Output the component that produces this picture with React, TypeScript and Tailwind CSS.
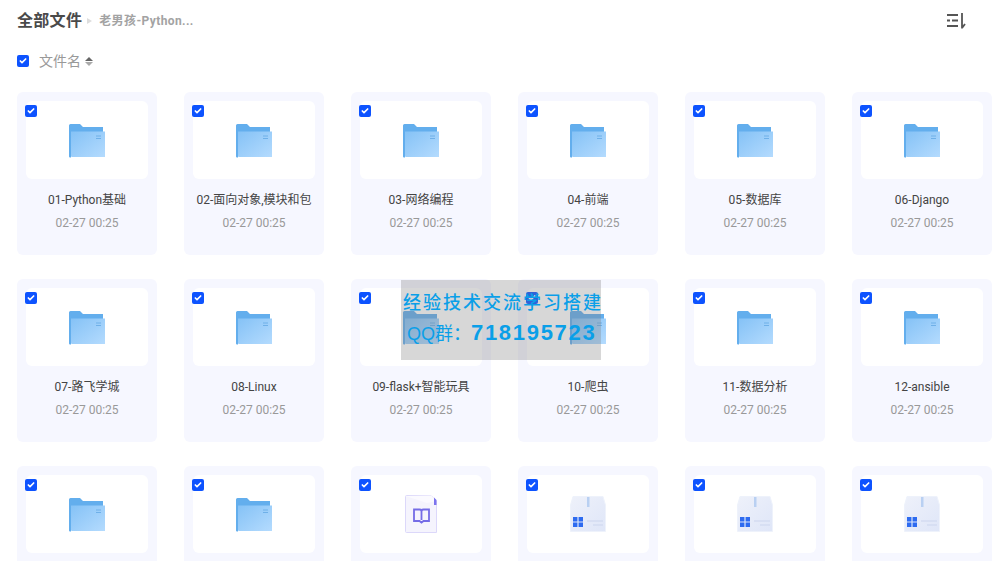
import { Check } from "lucide-react";

type Kind = "folder" | "book" | "box";

const files: { name?: string; date?: string; kind: Kind }[] = [
  { name: "01-Python基础", date: "02-27 00:25", kind: "folder" },
  { name: "02-面向对象,模块和包", date: "02-27 00:25", kind: "folder" },
  { name: "03-网络编程", date: "02-27 00:25", kind: "folder" },
  { name: "04-前端", date: "02-27 00:25", kind: "folder" },
  { name: "05-数据库", date: "02-27 00:25", kind: "folder" },
  { name: "06-Django", date: "02-27 00:25", kind: "folder" },
  { name: "07-路飞学城", date: "02-27 00:25", kind: "folder" },
  { name: "08-Linux", date: "02-27 00:25", kind: "folder" },
  { name: "09-flask+智能玩具", date: "02-27 00:25", kind: "folder" },
  { name: "10-爬虫", date: "02-27 00:25", kind: "folder" },
  { name: "11-数据分析", date: "02-27 00:25", kind: "folder" },
  { name: "12-ansible", date: "02-27 00:25", kind: "folder" },
  { kind: "folder" },
  { kind: "folder" },
  { kind: "book" },
  { kind: "box" },
  { kind: "box" },
  { kind: "box" },
];

function FolderIcon() {
  return (
    <svg width="36" height="34" viewBox="0 0 36 34" className="mt-[2px] block">
      <defs>
        <linearGradient id="front" x1="0" y1="0" x2="1" y2="1">
          <stop offset="0" stopColor="#85c2f6" />
          <stop offset="1" stopColor="#b4dbfe" />
        </linearGradient>
      </defs>
      <path d="M0 1.5Q0 0 1.5 0H11L14 3H34V28H2V33.5H1Q0 33.5 0 32.5Z" fill="#63aeed" />
      <path d="M2 7.5H36V33H3Q2 33 2 32Z" fill="url(#front)" />
      <path d="M27 12H32M27 14.5H32" stroke="#6fb0e8" strokeWidth="1" />
    </svg>
  );
}

function BookIcon() {
  return (
    <svg width="32" height="38" viewBox="0 0 32 38" className="block">
      <path d="M1.5 .5H26L31.5 6V37.5H1.5Q.5 37.5 .5 36.5V1.5Q.5 .5 1.5 .5Z" fill="#f5f4fd" stroke="#dcd8fa" />
      <path d="M.5 1L22 8 31.5 6 26 .5Z" fill="#fbfaff" />
      <path d="M29 2.5L31.5 5V10H29Z" fill="#7c74ee" />
      <path d="M9 14.5H14.5Q16.5 14.5 16.5 16.5Q16.5 14.5 18.5 14.5H24V26H18.5L16.5 27.5L14.5 26H9ZM16.5 16.5V25" fill="none" stroke="#756ce6" strokeWidth="1.8" />
    </svg>
  );
}

function BoxIcon() {
  return (
    <svg width="36" height="36" viewBox="0 0 36 36" className="block">
      <defs>
        <linearGradient id="box" x1="0" y1="0" x2="1" y2="1">
          <stop offset="0" stopColor="#eef1fa" />
          <stop offset="1" stopColor="#dfe6f8" />
        </linearGradient>
      </defs>
      <path d="M3 .5H33L35.5 9V35.5H.5V9Z" fill="url(#box)" stroke="#eef2fb" />
      <path d="M17 1H19.5V11H17Z" fill="#b9d0f2" />
      <path d="M3 21H13V31H3Z" fill="#2e6bf0" />
      <path d="M8 21V31M3 26H13" stroke="#dbe6fb" strokeWidth="1.2" />
      <path d="M17 25H33M23 29H33" stroke="#d3dcf1" strokeWidth="1.5" />
    </svg>
  );
}

function Tick({ className }: { className: string }) {
  return (
    <span className={`flex w-3 h-3 items-center justify-center rounded-[2px] bg-[#0d53ff] ${className}`}>
      <Check className="w-[8px] h-[8px] text-white" strokeWidth={5} />
    </span>
  );
}

export default function App() {
  return (
    <div className="relative h-[561px] w-[1003px] overflow-hidden bg-white font-['Roboto','Noto_Sans_CJK_SC',sans-serif]">
      <div className="flex h-[42px] items-center pl-[17px] pr-[36px]">
        <span className="text-[16px] font-bold leading-[20px] tracking-[.3px] text-[#4a4a4a]">全部文件</span>
        <span className="ml-[5px] h-0 w-0 border-y-[3.5px] border-l-[5px] border-y-transparent border-l-[#ddd]" />
        <span className="ml-[7px] text-[12px] font-bold tracking-[.4px] text-[#a3a3a3]">老男孩-Python...</span>
        <svg width="20" height="16" viewBox="0 0 20 16" className="ml-auto text-[#555]">
          <path d="M0 2H11M0 7.5H3M5 7.5H11M0 13H11M15 0V15.5M15 15L18 11" fill="none" stroke="currentColor" strokeWidth="1.8" />
        </svg>
      </div>
      <div className="mt-[13px] flex h-[12px] items-center pl-[17px]">
        <Tick className="" />
        <span className="ml-[10px] text-[14px] text-[#999]">文件名</span>
        <span className="ml-[4px] flex flex-col gap-[1px]">
          <span className="h-0 w-0 border-x-[4px] border-b-[4px] border-x-transparent border-b-[#666]" />
          <span className="h-0 w-0 border-x-[4px] border-t-[4px] border-x-transparent border-t-[#aaa]" />
        </span>
      </div>
      <div className="mt-[25px] grid grid-cols-[repeat(6,140px)] gap-x-[27px] gap-y-[24px] pl-[17px]">
        {files.map((file, i) => (
          <div key={i} className="h-[163px] rounded-[6px] bg-[#f6f7ff] px-[9px] pt-[9px]">
            <div className="relative flex h-[78px] w-[122px] items-center justify-center rounded-[6px] bg-white">
              <Tick className="absolute left-[-1px] top-[4px]" />
              {file.kind === "folder" && <FolderIcon />}
              {file.kind === "book" && <BookIcon />}
              {file.kind === "box" && <BoxIcon />}
            </div>
            <div className="mt-[12px] text-center text-[12px] leading-[18px] text-[#444]">{file.name}</div>
            <div className="mt-[5px] text-center text-[12px] leading-[18px] text-[#999]">{file.date}</div>
          </div>
        ))}
      </div>
      {/* watermark pasted over the page */}
      <div className="absolute left-[401px] top-[280px] flex h-[80px] w-[200px] flex-col bg-[#80808050] pt-[9px] text-[#0a9fe8]">
        <div className="whitespace-nowrap pl-[2px] font-['Noto_Sans_CJK_SC',sans-serif] text-[18px] font-medium leading-[24px] tracking-[2px]">
          经验技术交流学习搭建
        </div>
        <div className="mt-[7px] flex items-baseline whitespace-nowrap pl-[6px] font-['Liberation_Sans','Noto_Sans_CJK_SC',sans-serif]">
          <span className="w-[64px] text-[18px] leading-[26px]">QQ群：</span>
          <span className="text-[22px] font-bold leading-[26px] tracking-[1.7px]">718195723</span>
        </div>
      </div>
    </div>
  );
}
